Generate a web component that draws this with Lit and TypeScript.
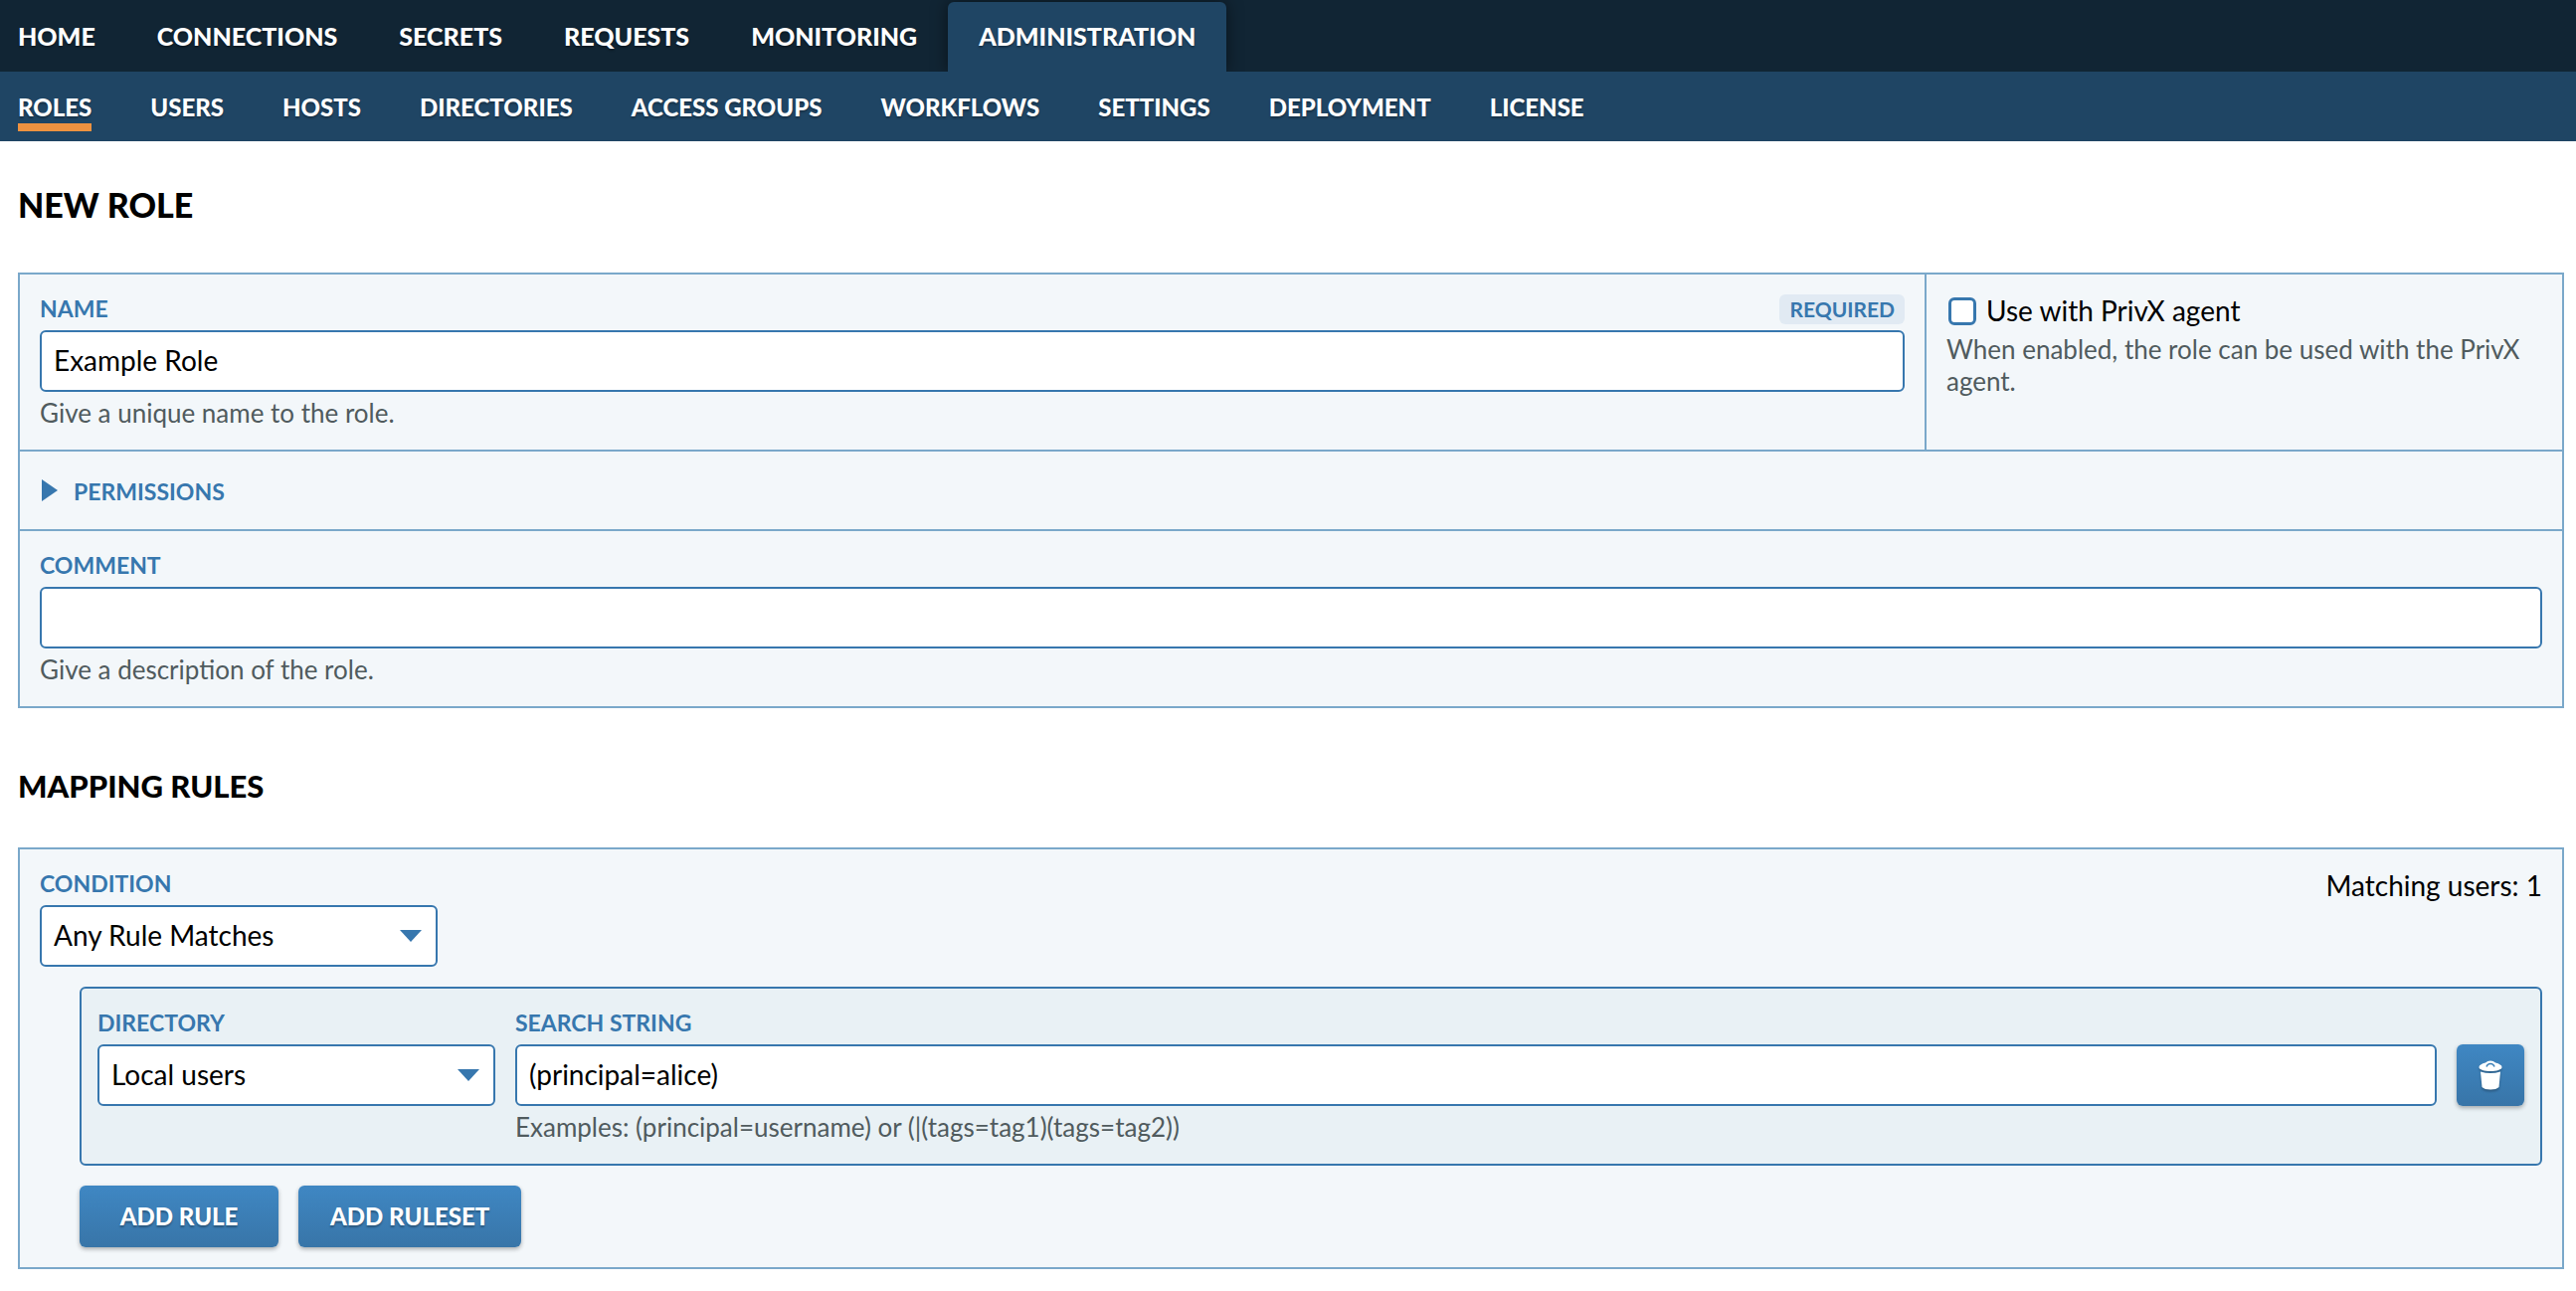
import { LitElement, html, css } from "lit";
import { customElement, state } from "lit/decorators.js";

const MAIN_NAV = ["Home", "Connections", "Secrets", "Requests", "Monitoring", "Administration"];
const SUB_NAV = [
  "Roles", "Users", "Hosts", "Directories", "Access groups",
  "Workflows", "Settings", "Deployment", "License",
];

@customElement("app-root")
export class AppRoot extends LitElement {
  @state() private permissionsOpen = false;

  static styles = css`
    :host {
      display: block;
      min-height: 100vh;
      background: #fff;
      color: #000;
      font-family: Lato, "Open Sans", sans-serif;
      font-size: 28px;
      line-height: 32px;
      --blue: #3777ae;
      --line: #7aa8ca;
    }
    * { box-sizing: border-box; }
    .main-nav, .sub-nav {
      display: flex;
      font-weight: 900;
      text-transform: uppercase;
    }
    .main-nav {
      background: #112534;
      padding: 2px 0 0;
      height: 72px;
      overflow: hidden;
      font-size: 25px;
    }
    .sub-nav {
      background: #1f4564;
      height: 70px;
      padding-left: 18px;
      gap: 59px;
      font-size: 24px;
    }
    .main-nav a, .sub-nav a {
      color: #fff;
      text-decoration: none;
      text-shadow: 0 2px 2px rgba(0, 0, 0, 0.3);
      white-space: nowrap;
    }
    .main-nav a { padding: 18px 31px; }
    .main-nav a:first-child { padding-left: 18px; }
    .main-nav a.active {
      background: #1f4564;
      border-radius: 6px 6px 0 0;
      box-shadow: 0 0 16px rgba(0, 0, 0, 0.5);
    }
    .sub-nav a { margin-top: 20px; height: 40px; }
    .sub-nav a.active { border-bottom: 8px solid #ee9240; }

    main { padding: 0 12px 22px 18px; }
    h1, h2 { margin: 0; font-weight: 900; text-transform: uppercase; }
    h1 { font-size: 34px; line-height: 40px; padding: 44px 0 48px; }
    h2 { font-size: 31px; line-height: 40px; padding: 58px 0 42px; }

    .panel { border: 2px solid var(--line); background: #f3f7fa; }
    .row + .row { border-top: 2px solid var(--line); }
    .row.split { display: grid; grid-template-columns: 3fr 1fr; }
    .cell { padding: 20px; min-width: 0; }
    .split .cell:first-child { border-right: 2px solid var(--line); }

    .head { display: flex; justify-content: space-between; height: 36px; }
    .label {
      color: var(--blue);
      font-size: 23px;
      line-height: 28px;
      font-weight: 700;
      text-transform: uppercase;
      white-space: nowrap;
    }
    .badge {
      height: 30px;
      padding: 0 10px;
      border-radius: 6px;
      background: #e1eaf3;
      color: var(--blue);
      font-size: 21px;
      line-height: 30px;
      font-weight: 700;
      text-transform: uppercase;
    }
    .field, select {
      display: block;
      width: 100%;
      height: 62px;
      margin: 0;
      padding: 0 12px 2px;
      border: 2px solid var(--blue);
      border-radius: 6px;
      background: #fff;
      color: #000;
      font: inherit;
      appearance: none;
    }
    .help { margin: 5px 0 1px; color: #505b5e; font-size: 26px; line-height: 32px; }

    .check { display: flex; align-items: center; gap: 10px; height: 34px; }
    .check input {
      appearance: none;
      flex: none;
      width: 28px;
      height: 28px;
      margin: 0 0 0 2px;
      border: 3px solid var(--blue);
      border-radius: 6px;
      background: #fff;
    }
    .check input:checked { background: var(--blue); }
    .check label { line-height: 32px; padding-bottom: 2px; }

    .disclosure {
      display: flex;
      align-items: center;
      gap: 16px;
      width: 100%;
      height: 78px;
      padding: 0 22px;
      border: 0;
      background: none;
      font-family: inherit;
      text-align: left;
    }
    .disclosure svg { width: 16px; height: 22px; fill: var(--blue); }
    .disclosure .label { padding-top: 2px; }

    .select { position: relative; width: 400px; }
    .select svg {
      position: absolute;
      right: 16px;
      top: 25px;
      width: 22px;
      height: 12px;
      fill: var(--blue);
      pointer-events: none;
    }
    .condition { display: flex; justify-content: space-between; }
    .rules { margin: 20px 0 0 40px; }
    .rule {
      display: grid;
      grid-template-columns: auto 1fr auto;
      gap: 20px;
      padding: 20px 16px;
      border: 2px solid var(--blue);
      border-radius: 6px;
      background: #e9f1f5;
    }
    .button {
      height: 62px;
      border: 0;
      border-radius: 6px;
      background: linear-gradient(#3f87c3, #3875a8);
      box-shadow: 0 2px 4px rgba(0, 0, 0, 0.3);
      color: #fff;
      font: 900 24px/32px Lato, "Open Sans", sans-serif;
      text-transform: uppercase;
      text-shadow: 0 2px 2px rgba(0, 0, 0, 0.3);
    }
    .icon { display: grid; place-items: center; width: 68px; margin-top: 36px; padding: 0; }
    .icon svg { width: 24px; height: 30px; filter: drop-shadow(0 2px 1px rgba(0, 0, 0, 0.25)); }
    .actions { display: flex; gap: 20px; margin-top: 20px; }
    .actions .button { min-width: 200px; padding: 0 32px; }
  `;

  private arrow() {
    return html`<svg viewBox="0 0 22 12" aria-hidden="true"><path d="M0 0H22L11 12Z" /></svg>`;
  }

  render() {
    return html`
      <header>
        <nav class="main-nav" aria-label="Main">
          ${MAIN_NAV.map((t) => html`<a href="#" class=${t === "Administration" ? "active" : ""}>${t}</a>`)}
        </nav>
        <nav class="sub-nav" aria-label="Administration">
          ${SUB_NAV.map((t) => html`<a href="#" class=${t === "Roles" ? "active" : ""}>${t}</a>`)}
        </nav>
      </header>
      <main>
        <h1>New role</h1>
        <section class="panel">
          <div class="row split">
            <div class="cell">
              <div class="head">
                <label class="label" for="name">Name</label>
                <span class="badge">Required</span>
              </div>
              <input class="field" id="name" type="text" value="Example Role" />
              <p class="help">Give a unique name to the role.</p>
            </div>
            <div class="cell">
              <div class="check">
                <input id="agent" type="checkbox" />
                <label for="agent">Use with PrivX agent</label>
              </div>
              <p class="help">When enabled, the role can be used with the PrivX agent.</p>
            </div>
          </div>
          <div class="row">
            <button
              class="disclosure"
              aria-expanded=${this.permissionsOpen ? "true" : "false"}
              @click=${() => (this.permissionsOpen = !this.permissionsOpen)}
            >
              <svg viewBox="0 0 16 22" aria-hidden="true"><path d="M0 0L16 11L0 22Z" /></svg>
              <span class="label">Permissions</span>
            </button>
          </div>
          <div class="row cell">
            <div class="head"><label class="label" for="comment">Comment</label></div>
            <input class="field" id="comment" type="text" />
            <p class="help">Give a description of the role.</p>
          </div>
        </section>

        <h2>Mapping rules</h2>
        <section class="panel cell">
          <div class="condition">
            <div class="select">
              <div class="head"><label class="label" for="condition">Condition</label></div>
              <div class="select">
                <select id="condition"><option>Any Rule Matches</option><option>All Rules Match</option></select>
                ${this.arrow()}
              </div>
            </div>
            <span>Matching users: 1</span>
          </div>
          <div class="rules">
            <div class="rule">
              <div>
                <div class="head"><label class="label" for="directory">Directory</label></div>
                <div class="select">
                  <select id="directory"><option>Local users</option></select>
                  ${this.arrow()}
                </div>
              </div>
              <div>
                <div class="head"><label class="label" for="search">Search string</label></div>
                <input class="field" id="search" type="text" value="(principal=alice)" />
                <p class="help">Examples: (principal=username) or (|(tags=tag1)(tags=tag2))</p>
              </div>
              <button class="button icon" aria-label="Delete rule">
                <svg viewBox="0 0 24 30" aria-hidden="true">
                  <path fill="#fff" d="M7 2.500Q9 .5 12 .5T17 2.500C21 3.500 23.500 5 23.500 7C23.500 9.500 18 11 12 11S.5 9.500 .5 7C.5 5 3 3.500 7 2.500Z" />
                  <path fill="none" stroke="#3c80b9" stroke-width="1.500" d="M8 6.500Q9 3.500 12 3.500T16 6.500" />
                  <path fill="#fff" d="M2 11.500Q12 14.500 22 11.500L20.500 27Q18 29.500 12 29.500T3.500 27Z" />
                </svg>
              </button>
            </div>
            <div class="actions">
              <button class="button">Add rule</button>
              <button class="button">Add ruleset</button>
            </div>
          </div>
        </section>
      </main>
    `;
  }
}
